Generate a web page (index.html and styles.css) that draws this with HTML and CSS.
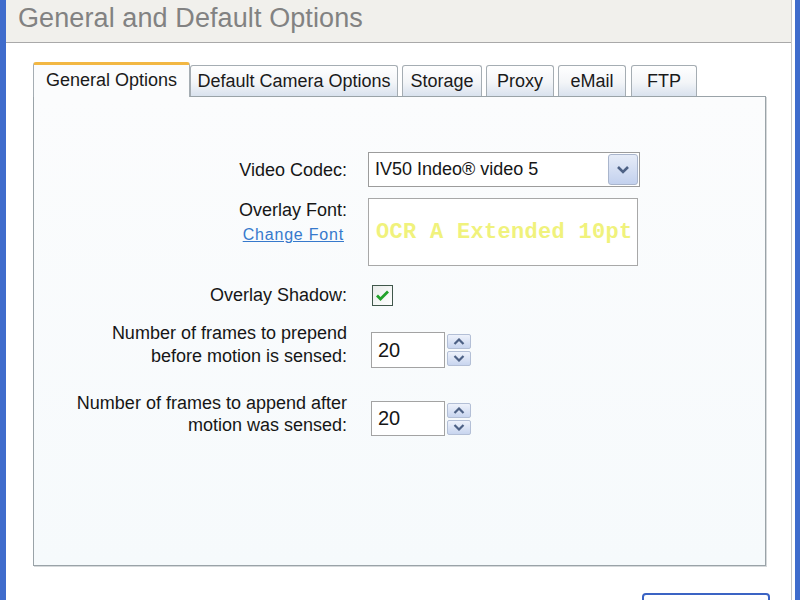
FILE: index.html
```html
<!DOCTYPE html>
<html>

<head>
    <meta name="viewport" content="width=device-width, initial-scale=1.0" />
    <title>General and Default Options</title>
    <link rel="stylesheet" href="styles.css">
</head>

<body>
    <div class="window">
        <div class="frame">
            <div class="titlebar">
                <h1>General and Default Options</h1>
            </div>

            <div class="content">
                <div class="tabs">
                    <div class="tab active">General Options</div>
                    <div class="tab tab-camera">Default Camera Options</div>
                    <div class="tab tab-storage">Storage</div>
                    <div class="tab tab-proxy">Proxy</div>
                    <div class="tab tab-email">eMail</div>
                    <div class="tab tab-ftp">FTP</div>
                </div>

                <div class="panel">
                    <div class="row row-codec">
                        <label class="label">Video Codec:</label>
                        <div class="select">
                            <span class="select-text">IV50 Indeo® video 5</span>
                            <span class="select-button">
                                <svg width="14" height="9" viewBox="0 0 14 9">
                                    <path d="M2 2 L7 7 L12 2" fill="none" stroke="#4d6185" stroke-width="2.6" />
                                </svg>
                            </span>
                        </div>
                    </div>

                    <div class="row row-font">
                        <div class="label label-stack">
                            <span>Overlay Font:</span>
                            <a class="link" href="#">Change Font</a>
                        </div>
                        <div class="font-preview">OCR A Extended 10pt</div>
                    </div>

                    <div class="row row-shadow">
                        <label class="label">Overlay Shadow:</label>
                        <div class="checkbox">
                            <svg width="15" height="13" viewBox="0 0 15 13">
                                <path d="M2 6.5 L5.5 10 L13 2.5" fill="none" stroke="#22a22a" stroke-width="2.8" />
                            </svg>
                        </div>
                    </div>

                    <div class="row row-prepend">
                        <label class="label label-two">Number of frames to prepend<br>before motion is sensed:</label>
                        <div class="spin">
                            <div class="spin-input">20</div>
                            <div class="spin-buttons">
                                <span class="spin-btn">
                                    <svg width="12" height="7" viewBox="0 0 12 7"><path d="M1.5 6 L6 1.5 L10.5 6" fill="none" stroke="#4d6185" stroke-width="2.2" /></svg>
                                </span>
                                <span class="spin-btn">
                                    <svg width="12" height="7" viewBox="0 0 12 7"><path d="M1.5 1 L6 5.5 L10.5 1" fill="none" stroke="#4d6185" stroke-width="2.2" /></svg>
                                </span>
                            </div>
                        </div>
                    </div>

                    <div class="row row-append">
                        <label class="label label-two">Number of frames to append after<br>motion was sensed:</label>
                        <div class="spin">
                            <div class="spin-input">20</div>
                            <div class="spin-buttons">
                                <span class="spin-btn">
                                    <svg width="12" height="7" viewBox="0 0 12 7"><path d="M1.5 6 L6 1.5 L10.5 6" fill="none" stroke="#4d6185" stroke-width="2.2" /></svg>
                                </span>
                                <span class="spin-btn">
                                    <svg width="12" height="7" viewBox="0 0 12 7"><path d="M1.5 1 L6 5.5 L10.5 1" fill="none" stroke="#4d6185" stroke-width="2.2" /></svg>
                                </span>
                            </div>
                        </div>
                    </div>
                </div>

                <div class="buttons">
                    <div class="button"></div>
                </div>
            </div>
        </div>
    </div>
</body>

</html>
```

FILE: styles.css
```css
html,
body {
    margin: 0;
    height: 600px;
    overflow: hidden;
    background: #ffffff;
}

body {
    font-family: "Liberation Sans", Arial, sans-serif;
    color: #161616;
}

.window {
    height: 600px;
    box-sizing: border-box;
    border-left: 6px solid #3f6ccc;
    border-right: 5px solid #3f6ccc;
    padding-right: 3px;
}

.frame {
    height: 100%;
    border-right: 1px solid #c6c6c6;
    background: #ffffff;
}

.titlebar {
    height: 42px;
    background: #f1f0ec;
    border-bottom: 1px solid #a9a9a9;
}

.titlebar h1 {
    margin: 0;
    padding: 3px 0 0 12px;
    font-size: 27px;
    font-weight: normal;
    line-height: 30px;
    letter-spacing: 0.1px;
    color: #828282;
}

.content {
    padding: 19px 0 0 27px;
}

/* tab strip */
.tabs {
    display: flex;
    align-items: flex-end;
    height: 34px;
}

.tab {
    box-sizing: border-box;
    height: 31px;
    margin-right: 4px;
    border: 1px solid #a5adb3;
    border-bottom: none;
    border-radius: 3px 3px 0 0;
    background: linear-gradient(#ffffff, #f3f5f8 55%, #d9e2ee);
    font-size: 18px;
    line-height: 30px;
    text-align: center;
    color: #1a1a1a;
}

.tab.active {
    position: relative;
    z-index: 1;
    width: 157px;
    height: 35px;
    margin-right: 0;
    margin-bottom: -1px;
    padding-top: 1px;
    border-top: 3px solid #f2b743;
    background: #fbfcfd;
    line-height: 28px;
}

.tab-camera {
    width: 208px;
}

.tab-storage {
    width: 80px;
}

.tab-proxy {
    width: 68px;
}

.tab-email {
    width: 68px;
    margin-right: 5px;
}

.tab-ftp {
    width: 66px;
}

/* main panel */
.panel {
    box-sizing: border-box;
    width: 733px;
    height: 470px;
    padding-top: 55px;
    border: 1px solid #9aa3a8;
    background: linear-gradient(#fbfcfd, #f6fafc);
    box-shadow: 1px 1px 0 #d6d9db;
}

.row {
    display: grid;
    grid-template-columns: 313px auto;
    column-gap: 21px;
    align-items: center;
}

.label {
    font-size: 18px;
    line-height: 22px;
    text-align: right;
}

.label-stack {
    display: flex;
    flex-direction: column;
    align-items: flex-end;
    align-self: start;
    padding-top: 1px;
}

.label-two {
    line-height: 23px;
}

.link {
    margin-top: 3px;
    margin-right: 3px;
    font-size: 16px;
    letter-spacing: 0.8px;
    color: #3679cc;
}

.row-font {
    margin-top: 11px;
}

.row-shadow {
    margin-top: 18px;
}

.row-prepend {
    margin-top: 16px;
    align-items: end;
}

.row-append {
    margin-top: 24px;
    align-items: end;
}

.row-append .label-two {
    line-height: 22px;
}

/* select box */
.select {
    box-sizing: border-box;
    display: flex;
    align-items: center;
    justify-content: space-between;
    width: 272px;
    height: 35px;
    padding: 1px 1px 1px 6px;
    border: 1px solid #9c9c9c;
    background: #ffffff;
}

.select-text {
    font-size: 18px;
}

.select-button {
    box-sizing: border-box;
    display: flex;
    align-items: center;
    justify-content: center;
    width: 30px;
    height: 31px;
    border: 1px solid #a9b5cc;
    border-radius: 3px;
    background: linear-gradient(#e6ecf8, #c3d1ee);
}

/* font preview */
.font-preview {
    box-sizing: border-box;
    width: 270px;
    height: 68px;
    padding: 22px 0 0 7px;
    border: 1px solid #a8a8a8;
    background: #ffffff;
    font-family: "Liberation Mono", "Courier New", monospace;
    font-size: 22px;
    font-weight: bold;
    line-height: 24px;
    letter-spacing: 0.3px;
    white-space: nowrap;
    color: #f0f27c;
}

/* checkbox */
.checkbox {
    box-sizing: border-box;
    display: flex;
    align-items: center;
    justify-content: center;
    width: 21px;
    height: 21px;
    margin-left: 4px;
    border: 1px solid #40574b;
    background: linear-gradient(135deg, #e9ecea, #ffffff);
}

/* spinner */
.spin {
    display: flex;
    align-items: center;
    margin-left: 3px;
}

.spin-input {
    box-sizing: border-box;
    width: 74px;
    height: 36px;
    padding-left: 6px;
    border: 1px solid #a3a3a3;
    background: #ffffff;
    font-size: 20px;
    line-height: 34px;
}

.row-append .spin-input {
    height: 35px;
    line-height: 33px;
}

.spin-buttons {
    display: flex;
    flex-direction: column;
    gap: 2px;
    margin-left: 2px;
}

.spin-btn {
    box-sizing: border-box;
    display: flex;
    align-items: center;
    justify-content: center;
    width: 24px;
    height: 15px;
    border: 1px solid #b3bfd6;
    border-radius: 2px;
    background: linear-gradient(#eef2fb, #c8d5ef);
}

/* dialog buttons */
.buttons {
    display: flex;
    justify-content: flex-end;
    padding: 27px 21px 0 0;
}

.button {
    box-sizing: border-box;
    width: 128px;
    height: 30px;
    border: 2px solid #3a63c4;
    border-radius: 4px;
    background: linear-gradient(#ffffff, #ecf1fb);
}
```
